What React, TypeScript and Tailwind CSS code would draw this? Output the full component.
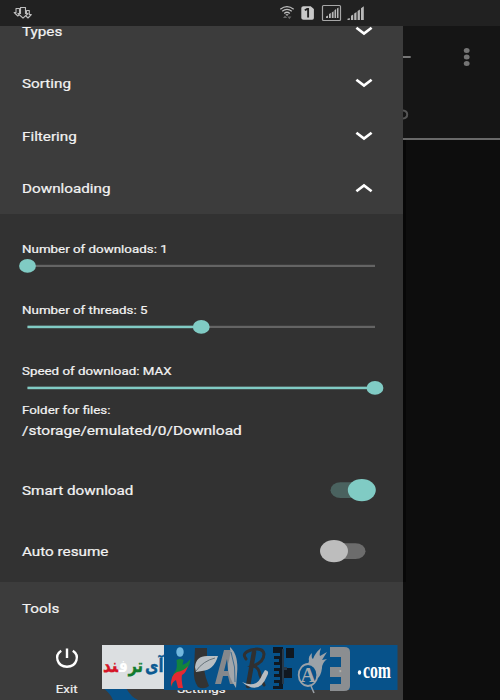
import type { ReactNode } from 'react';

function Wide({ children, className = '' }: { children: ReactNode; className?: string }) {
  return (
    <span className={`inline-block origin-left scale-x-[1.26] whitespace-nowrap [-webkit-text-stroke:0.2px_#f2f2f2] ${className}`}>{children}</span>
  );
}

function Chevron({ up = false }: { up?: boolean }) {
  return (
    <svg className="h-[10px] w-[18px]" viewBox="0 0 18 10" fill="none" stroke="#fff" strokeWidth="2.7">
      <path d={up ? 'M1.4 8.2 9 2.4 16.6 8.2' : 'M1.4 1.8 9 7.6 16.6 1.8'} />
    </svg>
  );
}

function Group({ label, up }: { label: string; up?: boolean }) {
  return (
    <div className="flex h-[52.4px] shrink-0 items-center justify-between pr-[30px] pl-[22px]">
      <Wide className="pt-[2px] text-[12.1px]">{label}</Wide>
      <Chevron up={up} />
    </div>
  );
}

function Slider({ label, value }: { label: string; value: number }) {
  return (
    <div className="flex h-[61.2px] flex-col">
      <div className="flex h-4 items-center pl-[22px]">
        <Wide className="pt-[2px] text-[10.6px]">{label}</Wide>
      </div>
      <svg className="ml-[18px] h-[18px] w-[368px]" viewBox="0 0 368 18">
        <rect x="9.5" y="7.8" width="347.5" height="2.2" fill="#646464" />
        <rect x="9.5" y="7.7" width={347.5 * value} height="2.5" fill="#80cbc4" />
        <ellipse cx={9.5 + 347.5 * value} cy="8.9" rx="8.4" ry="6.8" fill="#80cbc4" />
      </svg>
    </div>
  );
}

function Toggle({ label, on }: { label: string; on?: boolean }) {
  return (
    <div className="flex h-[61.4px] items-center justify-between pr-[26px] pl-[22px]">
      <Wide className="pt-[2px] text-[12.1px]">{label}</Wide>
      <svg className="h-6 w-[58px]" viewBox="0 0 58 24">
        <rect x={on ? 11.5 : 11} y="4.3" width="35.5" height="15.8" rx="10" ry="7.9" fill={on ? '#4a625f' : '#6c6c6c'} />
        <ellipse cx={on ? 42.8 : 15} cy="12.1" rx="14" ry="11.1" fill={on ? '#80cbc4' : '#bdbdbd'} />
      </svg>
    </div>
  );
}

function StatusBar() {
  return (
    <div className="flex h-[26px] shrink-0 items-center bg-[#212121]">
      <svg className="h-[26px] w-[500px]" viewBox="0 0 500 26">
        <g fill="#272727" stroke="#bdbdbd" strokeWidth="1.1" strokeLinejoin="round">
          <path d="M16 8.5h3.5v4h2L17.8 16l-3.6-3.5H16z" />
          <path d="M26.5 10.5h2.8v4h2L28 18l-3.5-3.5h2z" />
          <path d="M20.5 7.5h5v6H28L23 18.2l-5-4.7h2.5z" />
        </g>
        <g fill="none" stroke="#bdbdbd" strokeWidth="1.3">
          <path d="M280.3 9.2q6.7-5.3 13.4 0" />
          <path d="M282.2 11.3q4.8-3.7 9.6 0" />
          <path d="M284.2 13.4q2.8-2.3 5.6 0" />
        </g>
        <path d="M285.3 14.2h3.4L287 16z" fill="#bdbdbd" />
        <path d="M283 18h4.2L285 15.4zM287.4 16.5h4L289.4 19.2z" fill="#686868" />
        <path d="M303.5 6.2h7.2l3.2 2.7v9.2q0 1.7-1.7 1.7h-8.7q-2.2 0-2.2-1.7V8q0-1.8 2.2-1.8z" fill="#c9c9c9" />
        <path d="M304.8 10.3 307.2 8.9h.9v8.6" fill="none" stroke="#222" strokeWidth="1.9" />
        <rect x="322.5" y="5.5" width="18" height="15" rx="1" fill="none" stroke="#a7a7a7" strokeWidth="1.2" />
        <g fill="#b8b8b8">
          <path d="M326 18v-1.5l2-1V18zM329 18v-4l1.8-1V18zM331.8 18v-5.6l1.8-1.2V18zM334.5 18v-7.8l1.6-1.2v9zM337 18V8.6l1.5-1V18z" />
          <path d="M347.5 20v-1.3l2.3-.8V20zM351 20v-4.2l2.2-1.2V20zM354.2 20v-6.4l2.3-1.5V20zM357.6 20v-9l2.3-1.5V20zM361 20V8.2l2.8-2V20z" />
        </g>
      </svg>
    </div>
  );
}

function Backdrop() {
  return (
    <div className="flex grow flex-col bg-[#0d0d0d]">
      <div className="h-[114px] border-b-2 border-[#696969] bg-[#151515]">
        <svg className="h-[112px] w-[97px]" viewBox="0 0 97 112">
          <path d="M0 31h7.7" stroke="#777" strokeWidth="2" />
          <g fill="#757575">
            <ellipse cx="63.7" cy="24.4" rx="2.9" ry="2.5" />
            <ellipse cx="63.7" cy="31" rx="2.9" ry="2.5" />
            <ellipse cx="63.7" cy="37.4" rx="2.9" ry="2.5" />
          </g>
          <path d="M0 84.4q4.2.3 4.2 4T0 92.4" fill="none" stroke="#555" strokeWidth="2" />
        </svg>
      </div>
      <div className="h-[442px] w-[3px] bg-[#070707]" />
    </div>
  );
}

function Watermark() {
  return (
    <svg className="absolute top-[640px] left-[98px] h-[60px] w-[304px]" viewBox="98 640 304 60">
      <path d="M103 688h23q5 9 12 12h-25q-3-7-10-12z" fill="#07528a" />
      <rect x="102" y="645" width="62" height="44" fill="#dcdfe1" />
      <rect x="164" y="645" width="233.5" height="45" fill="#07528a" />
      <g fontFamily="'DejaVu Sans', sans-serif" fontWeight="700" fontSize="18" direction="rtl">
        <text x="163.5" y="672" textLength="18.5" lengthAdjust="spacingAndGlyphs" fill="#0b5a92" stroke="#0b5a92" strokeWidth=".4">آی</text>
        <text x="143" y="672" textLength="14.5" lengthAdjust="spacingAndGlyphs" fill="#137b2d" stroke="#137b2d" strokeWidth=".4">تر</text>
        <text x="128" y="672" textLength="9.5" lengthAdjust="spacingAndGlyphs" fill="#fff">{'ف\u200d'}</text>
        <text x="118" y="672" textLength="15" lengthAdjust="spacingAndGlyphs" fill="#d51426" stroke="#d51426" strokeWidth=".4">{'\u200dند'}</text>
      </g>
      <ellipse cx="180" cy="652" rx="3.7" ry="4.8" fill="#72b8df" />
      <path d="M176.5 660q3.5-2 7 0l-1 5q5-2 8-6-1 10-8 13l-5 3q-5 4-5 13-2-12 3-17 2-3 1-11z" fill="#12843d" />
      <path d="M188 666q-2 7-6 9-1 4 1 13h-5l-2-8q-4 2-5 7-1-12 6-15 7-1 11-6z" fill="#e32932" />
      <path d="M195 648h12v10q-5 7-1 20l3 8q-5 4-11 1-5-7-4-18z" fill="#333" />
      <path d="M195 667q1-11 12-11h11q-4 14-16 15l-6 1z" fill="#b8bec2" />
      <path d="M196 671q7-10 19-13" fill="none" stroke="#68747b" strokeWidth="1" />
      <path d="m215 684 9-34h6l6 34h-6l-2-8h-5l-2 8zM224 671h4l-1-12z" fill="#85888c" />
      <path d="M230 647q9 8 7 27l-1 14q-9-13-8-24 3-9 2-17z" fill="#a2a7ab" />
      <path d="M231 652q5 15 4 30" fill="none" stroke="#3f6e92" />
      <g fill="none" stroke="#303030" strokeLinecap="round">
        <path d="M246 659q-5-6 5-9 12-3 13 4 0 8-11 12 6 1 7 9l4 10" strokeWidth="3" />
        <path d="m254 652-6 34" strokeWidth="4.5" />
      </g>
      <path d="M242 682q15 7 20-7l3-5q5 1 2 6-8 20-25 6z" fill="#b8bcc0" />
      <path d="M273 647h10v42h-10v-3h6v-3h-5v-3h6v-3h-6v-3h5v-3h-5v-3h6v-3h-6v-3h5v-3h-5v-3h6v-3h-7zM286 648h8v10h-8zM284 668h8v10h-8z" fill="#101820" />
      <path d="M282 649h2v35h-2zM284 651h3M282 667h5v3h-5z" fill="#26394a" />
      <path d="M303 668q5-2 6-7-1-5 3-8-1 5 1 6 2-6 8-11-2 6-1 8l7-4-5 8 5-1q-5 4-5 9-1 8-5 11-4-12-14-11z" fill="#9ca2a8" />
      <ellipse cx="308" cy="675" rx="9.3" ry="11" fill="#07528a" stroke="#9ca2a8" strokeWidth="1.8" />
      <text x="308" y="682" textAnchor="middle" fontFamily="'Liberation Serif', serif" fontWeight="700" fontSize="21" fill="#a7abae">A</text>
      <path d="m311 686 3 7" stroke="#9ca2a8" strokeWidth="1.5" />
      <path d="M330 647h14q6 0 6 5v34q0 5-6 5h-14v-7h11v-7h-11v-10h11v-10h-11z" fill="#8b8e91" />
      <text x="339" y="672.5" fontSize="5" fontFamily="Roboto, sans-serif" fill="#d2d2d2">»</text>
      <ellipse cx="359.5" cy="672.5" rx="1.7" ry="2.2" fill="#fff" />
      <text x="363" y="678" textLength="28" lengthAdjust="spacingAndGlyphs" fontFamily="'Liberation Serif', serif" fontWeight="700" fontSize="23" fill="#fff">com</text>
    </svg>
  );
}

export default function App() {
  return (
    <div className="relative flex h-[700px] w-[500px] flex-col overflow-hidden bg-[#0d0d0d] font-['Roboto',sans-serif] text-[#f2f2f2]">
      <StatusBar />
      <div className="flex min-h-0 grow">
        <div className="flex w-[403px] shrink-0 flex-col overflow-hidden bg-[#3c3c3c]">
          <div className="-mt-[21.4px] shrink-0">
            <Group label="Types" />
            <Group label="Sorting" />
            <Group label="Filtering" />
            <Group label="Downloading" up />
          </div>
          <div className="h-[368px] shrink-0 bg-[#323232] pt-[26.5px]">
            <Slider label="Number of downloads: 1" value={0} />
            <Slider label="Number of threads: 5" value={0.5} />
            <div className="h-[35px]">
              <Slider label="Speed of download: MAX" value={1} />
            </div>
            <div className="flex h-[61px] flex-col gap-1 pt-[4.5px] pl-[22px]">
              <Wide className="self-start text-[10.6px] leading-4">Folder for files:</Wide>
              <Wide className="self-start text-[12.3px] leading-4">/storage/emulated/0/Download</Wide>
            </div>
            <Toggle label="Smart download" on />
            <Toggle label="Auto resume" />
          </div>
          <div className="flex h-[54px] shrink-0 items-center pl-[22px]">
            <Wide className="text-[12.1px]">Tools</Wide>
          </div>
          <div className="flex shrink-0 pt-2">
            <div className="flex w-[134px] flex-col items-center gap-2.5">
              <svg className="h-7 w-[30px]" viewBox="0 0 30 28" fill="none" stroke="#fff" strokeWidth="2.4">
                <path d="M15 4.5V14M9.2 6.7C2.2 11.2 4.7 22.7 15 22.7S27.8 11.2 20.8 6.7" />
              </svg>
              <span className="scale-x-125 text-[10.6px] leading-4 [-webkit-text-stroke:0.2px_#f2f2f2]">Exit</span>
            </div>
            <div className="flex w-[134px] flex-col items-center pt-[38px]">
              <span className="scale-x-125 text-[10.6px] leading-4 [-webkit-text-stroke:0.2px_#f2f2f2]">Settings</span>
            </div>
          </div>
        </div>
        <Backdrop />
      </div>
      <Watermark />
    </div>
  );
}
